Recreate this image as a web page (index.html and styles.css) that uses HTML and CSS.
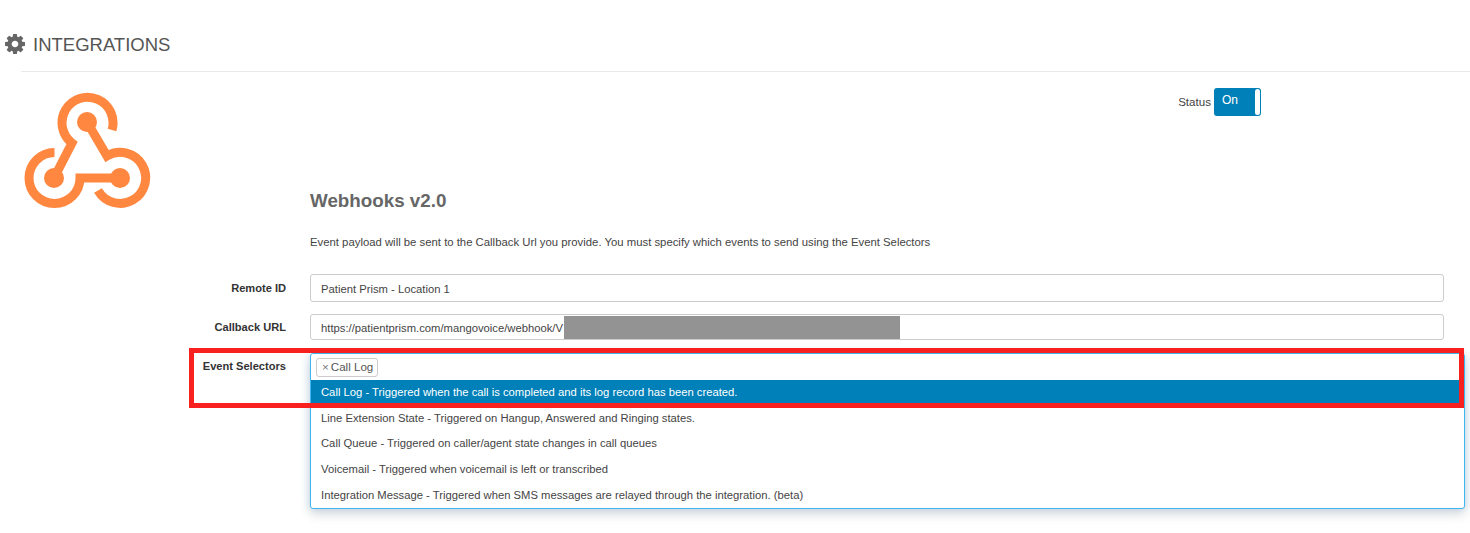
FILE: index.html
```html
<!DOCTYPE html>
<html lang="en">
<head>
<meta charset="utf-8">
<title>Integrations</title>
<link rel="stylesheet" href="styles.css">
</head>
<body>
<header class="page-header">
  <svg class="gear" viewBox="0 0 1536 1536" aria-hidden="true"><path d="M1024 768q0-106-75-181t-181-75-181 75-75 181 75 181 181 75 181-75 75-181zm512-109v222q0 12-8 23t-20 13l-185 28q-19 54-39 91 35 50 107 138 10 12 10 25t-9 23q-27 37-99 108t-94 71q-12 0-26-9l-138-108q-44 23-91 38-16 136-29 186-7 28-36 28h-222q-14 0-24.500-8.500t-11.500-21.500l-28-184q-49-16-90-37l-141 107q-10 9-25 9-14 0-25-11-126-114-165-168-7-10-7-23 0-12 8-23 15-21 51-66.500t54-70.500q-27-50-41-99l-183-27q-13-2-21-12.500t-8-23.500v-222q0-12 8-23t19-13l186-28q14-46 39-92-40-57-107-138-10-12-10-24 0-10 9-23 26-36 98.500-107.500t94.500-71.500q13 0 26 10l138 107q44-23 91-38 16-136 29-186 7-28 36-28h222q14 0 24.500 8.500t11.500 21.500l28 184q49 16 90 37l142-107q9-9 24-9 13 0 25 10 129 119 165 170 7 8 7 22 0 12-8 23-15 21-51 66.500t-54 70.500q26 50 41 98l183 28q13 2 21 12.500t8 23.500z"/></svg>
  <h1 class="page-title">INTEGRATIONS</h1>
</header>
<main class="content">
  <svg class="logo" viewBox="24 91 127 118" aria-hidden="true">
    <g class="logo-strokes">
      <path d="M112 130A25.500 25.500 0 1 0 72 143L54 178"/>
      <path d="M54.500 152.500A25.500 25.500 0 1 0 80 178H120"/>
      <path d="M98 190.500A25.500 25.500 0 1 0 107 156L87 122"/>
    </g>
    <circle class="logo-dot" cx="87" cy="122" r="10"/>
    <circle class="logo-dot" cx="54" cy="178" r="10"/>
    <circle class="logo-dot" cx="120" cy="178" r="10"/>
  </svg>
  <div class="status-row">
    <span class="status-label">Status</span>
    <div class="toggle"><span class="toggle-text">On</span><span class="toggle-handle"></span></div>
  </div>
  <section class="intro">
    <h2 class="intro-title">Webhooks v2.0</h2>
    <p class="intro-text">Event payload will be sent to the Callback Url you provide. You must specify which events to send using the Event Selectors</p>
  </section>
  <form class="form">
    <div class="form-row">
      <label class="form-label">Remote ID</label>
      <div class="input">Patient Prism - Location 1</div>
    </div>
    <div class="form-row form-row-url">
      <label class="form-label">Callback URL</label>
      <div class="input input-url">https://patientprism.com/mangovoice/webhook/V<span class="redacted"></span></div>
    </div>
    <div class="form-row form-row-select">
      <label class="form-label">Event Selectors</label>
      <div class="select">
        <div class="select-tags"><span class="tag"><span class="tag-x">×</span>Call Log</span></div>
        <ul class="options">
          <li class="option option-active">Call Log - Triggered when the call is completed and its log record has been created.</li>
          <li class="option">Line Extension State - Triggered on Hangup, Answered and Ringing states.</li>
          <li class="option">Call Queue - Triggered on caller/agent state changes in call queues</li>
          <li class="option">Voicemail - Triggered when voicemail is left or transcribed</li>
          <li class="option">Integration Message - Triggered when SMS messages are relayed through the integration. (beta)</li>
        </ul>
      </div>
      <div class="annotation"></div>
    </div>
  </form>
</main>
</body>
</html>
```
FILE: styles.css
```css
* { box-sizing: border-box; }
html, body { margin: 0; padding: 0; }
body {
  height: 533px;
  overflow: hidden;
  background: #fff;
  font-family: "Liberation Sans", Arial, sans-serif;
  font-size: 11.25px;
  color: #444;
}
.page-header {
  display: flex;
  align-items: center;
  height: 88px;
  padding-left: 5px;
  padding-bottom: 0;
}
.gear { width: 20px; height: 20px; fill: #666; margin-right: 8px; }
.page-title { margin: 2px 0 0; font-size: 18.5px; font-weight: 400; color: #555; }
.content {
  position: relative;
  margin-left: 21px;
  border-top: 1px solid #e8e8e8;
  margin-top: -17px;
  padding-top: 16px;
}
.logo {
  position: absolute;
  left: 3px;
  top: 19px;
  width: 127px;
  height: 118px;
}
.logo-strokes { fill: none; stroke: #ff8740; stroke-width: 9; }
.logo-dot { fill: #ff8740; }
.status-row {
  display: flex;
  justify-content: flex-end;
  align-items: center;
  gap: 3px;
  padding-right: 209px;
  height: 28px;
}
.status-label { margin-top: -2px; font-size: 11.6px; }
.toggle {
  position: relative;
  width: 47px;
  height: 28px;
  background: #0080b8;
  border-radius: 3px;
  color: #fff;
  font-size: 12px;
  padding: 5px 8px;
}
.toggle-handle {
  position: absolute;
  right: 1px;
  top: 1px;
  bottom: 1px;
  width: 5px;
  background: #fff;
  border-radius: 3px;
}
.intro { margin: 0 0 0 289px; padding-top: 74px; }
.intro-title { margin: 0; font-size: 18.8px; font-weight: 700; color: #666; line-height: 22px; }
.intro-text { margin: 22px 0 0; font-size: 11.33px; line-height: 16px; }
.form { margin-top: 24px; }
.form-row {
  position: relative;
  display: flex;
  align-items: flex-start;
  margin-bottom: 12px;
}
.form-label {
  width: 265px;
  margin-right: 24px;
  text-align: right;
  font-size: 11.1px;
  font-weight: 700;
  line-height: 28px;
  color: #333;
}
.input {
  position: relative;
  width: 1134px;
  height: 28px;
  line-height: 28px;
  border: 1px solid #ccc;
  border-radius: 3px;
  padding: 0 10px;
}
.form-row-url { margin-bottom: 13px; }
.form-row-url .input { height: 26px; line-height: 26px; }
.form-row-url .form-label { line-height: 26px; }
.redacted {
  position: absolute;
  left: 253px;
  top: 1px;
  width: 336px;
  height: 23px;
  background: #939393;
}
.form-row-select .form-label { line-height: 27px; }
.select {
  width: 1155px;
  height: 156px;
  border: 1px solid #3fb7ee;
  border-radius: 3px;
  background: #fff;
  box-shadow: 0 6px 12px rgba(0, 0, 0, 0.12), 0 0 8px rgba(102, 175, 233, 0.35);
}
.select-tags { height: 26px; padding: 4px 5px; }
.tag {
  display: inline-block;
  height: 19px;
  line-height: 16px;
  border: 1px solid #ccc;
  border-radius: 3px;
  padding: 0 4px 0 5px;
  font-size: 11.6px;
  color: #555;
}
.tag-x { margin-right: 2px; color: #777; }
.options { list-style: none; margin: 0; padding: 0; }
.option { height: 25.7px; line-height: 25px; padding-left: 10px; }
.option-active { background: #0080b8; color: #fff; }
.annotation {
  position: absolute;
  left: 168px;
  top: -5px;
  width: 1275px;
  height: 60px;
  border: 5px solid #f92020;
  pointer-events: none;
}
```
